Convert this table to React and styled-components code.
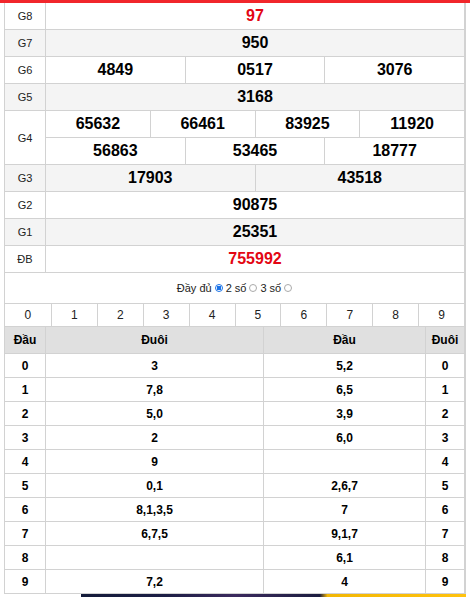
import styled, { createGlobalStyle } from "styled-components";

const GlobalStyle = createGlobalStyle`
  body {
    margin: 0;
    background: #fff;
    font-family: "Liberation Sans", Arial, sans-serif;
    color: #000;
  }
`;

const TopBar = styled.div`
  height: 3px;
  background: #f1262b;
`;

const Wrapper = styled.div`
  width: 462px;
  margin-left: 4px;
  border-left: 1px solid #d2d2d2;
  border-right: 2px solid #d2d2d2;
  box-sizing: border-box;
`;

const PrizeRow = styled.div`
  display: flex;
  background: ${(p) => (p.$alt ? "#f4f4f4" : "#fff")};
  border-bottom: 1px solid #d2d2d2;
`;

const Label = styled.div`
  width: 40px;
  flex-shrink: 0;
  display: flex;
  align-items: center;
  justify-content: center;
  font-size: 11px;
  color: #222;
  border-right: 1px solid #d2d2d2;
`;

const Values = styled.div`
  flex: 1;
  display: flex;
  flex-direction: column;
`;

const SubRow = styled.div`
  display: flex;
  height: 26px;
  & + & {
    border-top: 1px solid #d2d2d2;
  }
`;

const Num = styled.div`
  flex: 1;
  display: flex;
  align-items: center;
  justify-content: center;
  font-size: 16px;
  font-weight: 700;
  color: ${(p) => (p.$red ? "#e30613" : "#000")};
  & + & {
    border-left: 1px solid #d2d2d2;
  }
`;

const Options = styled.div`
  height: 30px;
  display: flex;
  align-items: center;
  justify-content: center;
  gap: 3px;
  font-size: 11px;
  color: #222;
  border-bottom: 1px solid #d2d2d2;
`;

const Radio = styled.span`
  width: 8px;
  height: 8px;
  border-radius: 50%;
  box-sizing: border-box;
  border: 1px solid ${(p) => (p.$on ? "#1a73e8" : "#aaa")};
  background: ${(p) => (p.$on ? "radial-gradient(circle, #1a73e8 55%, #fff 60%)" : "#fff")};
  display: inline-block;
`;

const DigitRow = styled.div`
  display: grid;
  grid-template-columns: repeat(10, 1fr);
  height: 22px;
  border-bottom: 1px solid #d2d2d2;
`;

const Digit = styled.div`
  display: flex;
  align-items: center;
  justify-content: center;
  font-size: 12px;
  color: #222;
  & + & {
    border-left: 1px solid #d2d2d2;
  }
`;

const StatRow = styled.div`
  display: grid;
  grid-template-columns: 40px 218px 162px 1fr;
  height: ${(p) => (p.$head ? "26px" : "23px")};
  background: ${(p) => (p.$head ? "#e0e0e0" : "#fff")};
  border-bottom: 1px solid #d2d2d2;
`;

const StatCell = styled.div`
  display: flex;
  align-items: center;
  justify-content: center;
  font-size: 12px;
  font-weight: 700;
  & + & {
    border-left: 1px solid #d2d2d2;
  }
`;

const Banner = styled.div`
  margin-left: 81px;
  width: 385px;
  height: 3px;
  background: linear-gradient(
    90deg,
    #141b3a 0%,
    #1c1e45 22%,
    #3b2a5e 40%,
    #1b1d3f 62%,
    #f2b705 64%,
    #ffc20e 100%
  );
`;

const prizes = [
  { label: "G8", rows: [["97"]], red: true },
  { label: "G7", rows: [["950"]], alt: true },
  { label: "G6", rows: [["4849", "0517", "3076"]] },
  { label: "G5", rows: [["3168"]], alt: true },
  {
    label: "G4",
    rows: [
      ["65632", "66461", "83925", "11920"],
      ["56863", "53465", "18777"],
    ],
  },
  { label: "G3", rows: [["17903", "43518"]], alt: true },
  { label: "G2", rows: [["90875"]] },
  { label: "G1", rows: [["25351"]], alt: true },
  { label: "ĐB", rows: [["755992"]], red: true },
];

const stats = [
  ["0", "3", "5,2", "0"],
  ["1", "7,8", "6,5", "1"],
  ["2", "5,0", "3,9", "2"],
  ["3", "2", "6,0", "3"],
  ["4", "9", "", "4"],
  ["5", "0,1", "2,6,7", "5"],
  ["6", "8,1,3,5", "7", "6"],
  ["7", "6,7,5", "9,1,7", "7"],
  ["8", "", "6,1", "8"],
  ["9", "7,2", "4", "9"],
];

function App() {
  return (
    <>
      <GlobalStyle />
      <TopBar />
      <Wrapper>
        {prizes.map((p) => (
          <PrizeRow key={p.label} $alt={p.alt}>
            <Label>{p.label}</Label>
            <Values>
              {p.rows.map((r, i) => (
                <SubRow key={i}>
                  {r.map((n) => (
                    <Num key={n} $red={p.red}>
                      {n}
                    </Num>
                  ))}
                </SubRow>
              ))}
            </Values>
          </PrizeRow>
        ))}
        <Options>
          <span>Đầy đủ</span>
          <Radio $on />
          <span>2 số</span>
          <Radio />
          <span>3 số</span>
          <Radio />
        </Options>
        <DigitRow>
          {[0, 1, 2, 3, 4, 5, 6, 7, 8, 9].map((d) => (
            <Digit key={d}>{d}</Digit>
          ))}
        </DigitRow>
        <StatRow $head>
          <StatCell>Đầu</StatCell>
          <StatCell>Đuôi</StatCell>
          <StatCell>Đầu</StatCell>
          <StatCell>Đuôi</StatCell>
        </StatRow>
        {stats.map((s) => (
          <StatRow key={s[0]}>
            {s.map((v, i) => (
              <StatCell key={i}>{v}</StatCell>
            ))}
          </StatRow>
        ))}
      </Wrapper>
      <Banner />
    </>
  );
}

export default App;
